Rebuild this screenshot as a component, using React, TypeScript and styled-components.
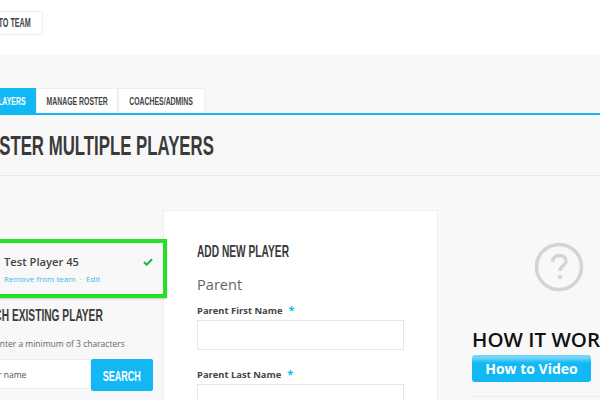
import React from "react";
import styled, { createGlobalStyle } from "styled-components";

const Blue = "#12b8f4";
const Heading = `"Liberation Sans", Arial, sans-serif`;

const GlobalStyle = createGlobalStyle`
  html, body {
    margin: 0;
    padding: 0;
    width: 600px;
    height: 400px;
    overflow: hidden;
    background: #f8f8f8;
  }
  * { box-sizing: border-box; }
`;

const Viewport = styled.div`
  width: 600px;
  height: 400px;
  overflow: hidden;
  font-family: "Open Sans", sans-serif;
  color: #444;
`;

const Shell = styled.div`
  width: 760px;
  margin-left: -100px;
`;

// no condensed display font on this box, so squeeze the bold sans
const Squeeze = styled.span<{ $origin?: string; $scale?: number }>`
  display: inline-block;
  font-family: ${Heading};
  font-weight: bold;
  white-space: nowrap;
  transform: scaleX(${(p) => p.$scale ?? 0.6});
  transform-origin: ${(p) => p.$origin ?? "left"} center;
`;

const TopBar = styled.div`
  height: 55px;
  background: #fff;
  padding: 11px 0 0 40px;
`;

const BackButton = styled.div`
  width: 103px;
  height: 24px;
  border: 1px solid #eee;
  border-radius: 3px;
  display: flex;
  align-items: center;
  justify-content: flex-end;
  padding-right: 11px;
  font-size: 12px;
  color: #444;
`;

const Tabs = styled.div`
  display: flex;
  padding: 33px 0 0 52px;
  border-bottom: 2px solid ${Blue};
  height: 60px;
`;

const Tab = styled.div<{ $active?: boolean; $width: number }>`
  width: ${(p) => p.$width}px;
  height: 25px;
  display: flex;
  align-items: center;
  justify-content: center;
  font-size: 11.5px;
  background: ${(p) => (p.$active ? Blue : "#fff")};
  color: ${(p) => (p.$active ? "#fff" : "#444")};
  border: 1px solid ${(p) => (p.$active ? Blue : "#eee")};
  border-bottom: none;
`;

const PageTitle = styled.h1`
  margin: 0;
  height: 61px;
  padding: 13px 0 0 74px;
  border-bottom: 1px solid #e8e8e8;
  font-size: 28px;
  line-height: 33px;
  font-weight: bold;
  color: #3a3a3a;
`;

const Columns = styled.div`
  display: flex;
  align-items: flex-start;
  padding-top: 34px;
`;

const LeftColumn = styled.div`
  width: 263px;
  padding: 29px 0 0 50px;
  flex-shrink: 0;
`;

const SelectedPlayer = styled.div`
  position: relative;
  z-index: 1;
  width: 217px;
  height: 59px;
  border: 4px solid #26e026;
  padding: 10px 10px 0 50px;
  background: #f8f8f8;
  box-shadow: 0 1px 2px rgba(0, 0, 0, 0.2);
`;

const PlayerRow = styled.div`
  display: flex;
  justify-content: space-between;
  align-items: center;
`;

const PlayerName = styled.div`
  font-size: 11.2px;
  font-weight: 600;
  line-height: 18px;
  color: #444;
`;

const PlayerLinks = styled.div`
  margin-top: 1px;
  font-size: 8px;
  line-height: 14px;
  color: #3cb8ea;
  white-space: nowrap;
`;

const SearchHeading = styled.h3`
  margin: 6px 0 0 16px;
  font-size: 17px;
  line-height: 22px;
  color: #3a3a3a;
`;

const HintText = styled.p`
  margin: 10px 0 0 45px;
  font-size: 8.5px;
  line-height: 14px;
  color: #666;
  white-space: nowrap;
`;

const SearchRow = styled.div`
  display: flex;
  margin-top: 8px;
`;

const SearchInput = styled.div`
  width: 141px;
  height: 30px;
  background: #fff;
  border: 1px solid #eee;
  display: flex;
  align-items: center;
  padding-left: 26px;
  font-size: 8.5px;
  color: #555;
  white-space: nowrap;
`;

const SearchButton = styled.div`
  width: 62px;
  height: 32px;
  background: ${Blue};
  border-radius: 2px;
  color: #fff;
  display: flex;
  align-items: center;
  justify-content: center;
  font-size: 15px;
`;

const Card = styled.div`
  width: 275px;
  height: 240px;
  flex-shrink: 0;
  background: #fff;
  border: 1px solid #f0f0f0;
  padding: 30px 33px 0 33px;
`;

const CardHeading = styled.h3`
  margin: 0;
  font-size: 17px;
  line-height: 20px;
  color: #3a3a3a;
`;

const SectionTitle = styled.div`
  margin-top: 10px;
  font-size: 14.6px;
  line-height: 24px;
  color: #666;
`;

const Label = styled.div`
  margin-top: 7px;
  font-size: 9.4px;
  font-weight: 700;
  line-height: 14px;
  color: #444;
`;

const Star = styled.span`
  color: ${Blue};
  margin-left: 6px;
  font-size: 11px;
`;

const TextBox = styled.div`
  width: 207px;
  height: 30px;
  margin: 2px 0 17px;
  border: 1px solid #e6e6e6;
  background: #fff;
`;

const RightColumn = styled.div`
  padding-left: 34px;
  width: 220px;
  flex-shrink: 0;
`;

const HelpIconWrap = styled.div`
  height: 103px;
  padding: 32px 0 0 62px;
`;

const HowHeading = styled.div`
  margin-top: 13px;
  font-size: 20.5px;
  font-weight: 600;
  line-height: 26px;
  color: #111;
  white-space: nowrap;
`;

const VideoButton = styled.div`
  width: 119px;
  height: 27px;
  margin-top: 3px;
  border-radius: 3px;
  background: linear-gradient(to bottom, #7ad6f8 0, #6fd3f8 3px, ${Blue} 8px, ${Blue} 100%);
  color: #fff;
  display: flex;
  align-items: center;
  justify-content: center;
  font-size: 14px;
  font-weight: 700;
`;

const RightRule = styled.div`
  height: 1px;
  background: #eee;
  margin-top: 14px;
`;

const App = () => (
  <Viewport>
    <GlobalStyle />
    <Shell>
      <TopBar>
        <BackButton>
          <Squeeze $origin="right">BACK TO TEAM</Squeeze>
        </BackButton>
      </TopBar>
      <Tabs>
        <Tab $active $width={84}>
          <Squeeze $origin="center">ROSTER PLAYERS</Squeeze>
        </Tab>
        <Tab $width={82}>
          <Squeeze $origin="center">MANAGE ROSTER</Squeeze>
        </Tab>
        <Tab $width={87}>
          <Squeeze $origin="center">COACHES/ADMINS</Squeeze>
        </Tab>
      </Tabs>
      <PageTitle>
        <Squeeze>ROSTER MULTIPLE PLAYERS</Squeeze>
      </PageTitle>
      <Columns>
        <LeftColumn>
          <SelectedPlayer>
            <PlayerRow>
              <PlayerName>Test Player 45</PlayerName>
              <svg width="10" height="8" viewBox="0 0 11 9">
                <path d="M1 4.5 L4 7.5 L10 1.5" fill="none" stroke="#25b34b" strokeWidth="2.4" />
              </svg>
            </PlayerRow>
            <PlayerLinks>Remove from team &nbsp;· &nbsp;Edit</PlayerLinks>
          </SelectedPlayer>
          <SearchHeading>
            <Squeeze>SEARCH EXISTING PLAYER</Squeeze>
          </SearchHeading>
          <HintText>Enter a minimum of 3 characters</HintText>
          <SearchRow>
            <SearchInput>Player name</SearchInput>
            <SearchButton>
              <Squeeze $origin="center">SEARCH</Squeeze>
            </SearchButton>
          </SearchRow>
        </LeftColumn>
        <Card>
          <CardHeading>
            <Squeeze>ADD NEW PLAYER</Squeeze>
          </CardHeading>
          <SectionTitle>Parent</SectionTitle>
          <Label>
            Parent First Name<Star>*</Star>
          </Label>
          <TextBox />
          <Label>
            Parent Last Name<Star>*</Star>
          </Label>
          <TextBox />
        </Card>
        <RightColumn>
          <HelpIconWrap>
            <svg width="50" height="50" viewBox="0 0 50 50">
              <circle cx="25" cy="25" r="22.5" fill="none" stroke="#d4d4d4" strokeWidth="3.5" />
              <path
                d="M18.5 20 C18.5 15.5 22 13.5 25.5 13.5 C29.5 13.5 32 16 32 19.2 C32 23.5 26 24 26 29"
                fill="none"
                stroke="#d4d4d4"
                strokeWidth="3.5"
              />
              <circle cx="26" cy="35" r="2.3" fill="#d4d4d4" />
            </svg>
          </HelpIconWrap>
          <HowHeading>HOW IT WORKS</HowHeading>
          <VideoButton>How to Video</VideoButton>
          <RightRule />
        </RightColumn>
      </Columns>
    </Shell>
  </Viewport>
);

export default App;
